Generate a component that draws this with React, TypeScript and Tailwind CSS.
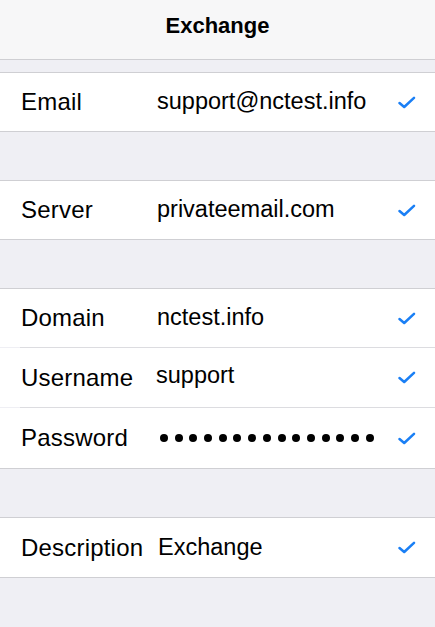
import React from 'react';

type Field = {
  label: string;
  value?: string;
  secret?: boolean;
  h: string;
  valueX?: string;
};

const groups: Field[][] = [
  [{ label: 'Email', value: 'support@nctest.info', h: 'h-[58px]' }],
  [{ label: 'Server', value: 'privateemail.com', h: 'h-[58px]' }],
  [
    { label: 'Domain', value: 'nctest.info', h: 'h-[58px]' },
    { label: 'Username', value: 'support', h: 'h-[59px]', valueX: 'ml-[-1px] -translate-y-[2px]' },
    { label: 'Password', secret: true, h: 'h-[60px]' },
  ],
  [{ label: 'Description', value: 'Exchange', h: 'h-[59px]', valueX: 'ml-[1px]' }],
];

const Check = () => (
  <svg width="18" height="13" viewBox="0 0 18 13" fill="none" className="shrink-0">
    <path d="M1.5 7 L6.2 11 L16 1.8" stroke="#1a7ff5" strokeWidth="2.5" strokeLinecap="round" strokeLinejoin="round" />
  </svg>
);

const Row: React.FC<{ field: Field; last: boolean }> = ({ field, last }) => (
  <div className={`flex ${field.h} items-center bg-white pl-[21px] relative`}>
    <span className="w-[136px] shrink-0 text-[24px] text-black tracking-[0.2px]">{field.label}</span>
    <div className={`flex-1 ${field.valueX ?? ''}`}>
      {field.secret ? (
        <div className="flex gap-[6.7px] pl-[3px]">
          {Array.from({ length: 15 }).map((_, i) => (
            <span key={i} className="w-2 h-2 rounded-full bg-black" />
          ))}
        </div>
      ) : (
        <span className="text-[23.5px] text-black">{field.value}</span>
      )}
    </div>
    <div className="w-[37px] shrink-0 flex">
      <Check />
    </div>
    {!last && <div className="absolute left-[20px] right-0 bottom-[-1px] h-px bg-[#dcdce0]" />}
  </div>
);

export default function App() {
  return (
    <div
      className="w-[435px] h-[627px] bg-[#efeff4] overflow-hidden"
      style={{ fontFamily: '"Liberation Sans", Arial, sans-serif' }}
    >
      <div className="h-[60px] bg-[#f7f7f8] border-b border-[#cfcfd3] flex items-center justify-center">
        <span className="text-[22px] font-bold text-black -mt-[8px]">Exchange</span>
      </div>
      <div className="pt-[12px] flex flex-col gap-[48px]">
        {groups.map((g, gi) => (
          <div key={gi} className="border-y border-[#cfcfd3] flex flex-col gap-px">
            {g.map((f, i) => (
              <Row key={f.label} field={f} last={i === g.length - 1} />
            ))}
          </div>
        ))}
      </div>
    </div>
  );
}
